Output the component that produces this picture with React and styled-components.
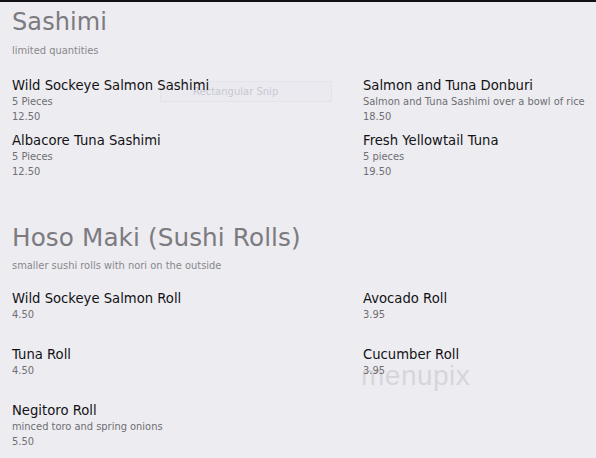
import React from "react";
import styled, { createGlobalStyle } from "styled-components";

const Global = createGlobalStyle`
  html, body { margin: 0; padding: 0; background: #edecf1; }
  body { font-family: "DejaVu Sans", "Liberation Sans", sans-serif; }
`;

const Page = styled.div`
  position: relative;
  width: 596px;
  height: 458px;
  overflow: hidden;
  background: #edecf1;
  border-top: 2px solid #101014;
  box-sizing: border-box;
  padding: 5px 0 0 12px;
`;

const Section = styled.section`
  margin-bottom: ${(p) => p.$gap || 0}px;
`;

const Heading = styled.h2`
  margin: 0;
  font-size: ${(p) => p.$size || 24}px;
  line-height: 30px;
  font-weight: normal;
  color: #7b7b80;
  letter-spacing: 0.1px;
`;

const Subtitle = styled.div`
  margin-top: 6.5px;
  font-size: 9.9px;
  line-height: 14px;
  color: #88888c;
`;

const Grid = styled.div`
  display: grid;
  grid-template-columns: 351px 1fr;
  grid-auto-rows: ${(p) => p.$row || 56}px;
  margin-top: ${(p) => p.$top || 18}px;
`;

const Item = styled.div`
  display: flex;
  flex-direction: column;
`;

const Title = styled.div`
  font-size: 13.2px;
  line-height: 17px;
  color: #121214;
`;

const Small = styled.div`
  font-size: 9.9px;
  line-height: 15px;
  color: #6e6e72;
`;

const Snip = styled.div`
  position: absolute;
  left: 160px;
  top: 79px;
  width: 172px;
  height: 21px;
  box-sizing: border-box;
  border: 1px solid #e3e3ea;
  background: rgba(232, 232, 240, 0.5);
  padding-left: 32px;
  font-size: 10px;
  line-height: 19px;
  color: #c9c9d1;
  z-index: 0;
`;

const Watermark = styled.div`
  position: absolute;
  left: 361px;
  top: 358px;
  font-family: "Liberation Sans", sans-serif;
  font-size: 28px;
  font-weight: 300;
  letter-spacing: 0.5px;
  color: rgba(190, 190, 196, 0.5);
  pointer-events: none;
`;

const Front = styled.div`
  position: relative;
  z-index: 1;
`;

const sashimi = [
  { t: "Wild Sockeye Salmon Sashimi", d: "5 Pieces", p: "12.50" },
  { t: "Salmon and Tuna Donburi", d: "Salmon and Tuna Sashimi over a bowl of rice", p: "18.50" },
  { t: "Albacore Tuna Sashimi", d: "5 Pieces", p: "12.50" },
  { t: "Fresh Yellowtail Tuna", d: "5 pieces", p: "19.50" },
];

const rolls = [
  { t: "Wild Sockeye Salmon Roll", p: "4.50" },
  { t: "Avocado Roll", p: "3.95" },
  { t: "Tuna Roll", p: "4.50" },
  { t: "Cucumber Roll", p: "3.95" },
  { t: "Negitoro Roll", d: "minced toro and spring onions", p: "5.50" },
];

const MenuItem = ({ t, d, p }) => (
  <Item>
    <Title>{t}</Title>
    {d && <Small>{d}</Small>}
    <Small>{p}</Small>
  </Item>
);

export default function App() {
  return (
    <>
      <Global />
      <Page>
        <Snip>Rectangular Snip</Snip>
        <Front>
          <Section $gap={36}>
            <Heading>Sashimi</Heading>
            <Subtitle>limited quantities</Subtitle>
            <Grid $row={55} $top={19}>
              {sashimi.map((it) => (
                <MenuItem key={it.t} {...it} />
              ))}
            </Grid>
          </Section>
          <Section>
            <Heading $size={24.7}>Hoso Maki (Sushi Rolls)</Heading>
            <Subtitle>smaller sushi rolls with nori on the outside</Subtitle>
            <Grid $row={56} $top={17}>
              {rolls.map((it) => (
                <MenuItem key={it.t} {...it} />
              ))}
            </Grid>
          </Section>
        </Front>
        <Watermark>menupix</Watermark>
      </Page>
    </>
  );
}
